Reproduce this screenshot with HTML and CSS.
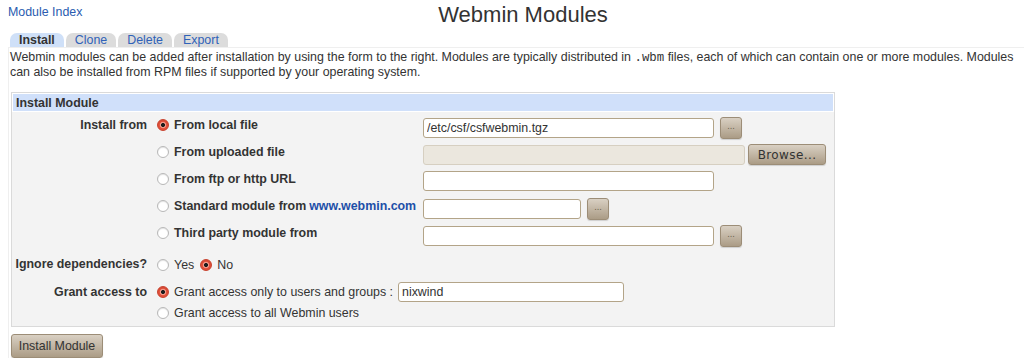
FILE: index.html
```html
<!DOCTYPE html>
<html lang="en">
<head>
    <meta charset="UTF-8">
    <title>Webmin Modules</title>
    <link rel="stylesheet" href="styles.css">
</head>
<body>
    <div class="top">
        <a class="index-link" href="#">Module Index</a>
        <h1>Webmin Modules</h1>
        <span></span>
    </div>

    <ul class="tabs">
        <li class="tab active">Install</li>
        <li class="tab">Clone</li>
        <li class="tab">Delete</li>
        <li class="tab">Export</li>
    </ul>

    <div class="panel">
        <p class="intro">Webmin modules can be added after installation by using the form to the right. Modules are typically distributed in <code>.wbm</code> files, each of which can contain one or more modules. Modules<br>can also be installed from RPM files if supported by your operating system.</p>

        <form class="box">
            <div class="box-head">Install Module</div>
            <div class="box-body">
                <div class="field">
                    <div class="field-label first">Install from</div>
                    <div class="sources">
                        <label class="opt strong"><input type="radio" name="source" checked> From local file</label>
                        <div class="ctl">
                            <input class="text wide" type="text" value="/etc/csf/csfwebmin.tgz">
                            <button type="button" class="btn dots">...</button>
                        </div>

                        <label class="opt strong"><input type="radio" name="source"> From uploaded file</label>
                        <div class="ctl">
                            <input class="text upload" type="text" disabled>
                            <button type="button" class="btn browse">Browse...</button>
                        </div>

                        <label class="opt strong"><input type="radio" name="source"> From ftp or http URL</label>
                        <div class="ctl">
                            <input class="text wide" type="text">
                        </div>

                        <label class="opt strong"><input type="radio" name="source"> Standard module from <a href="#">www.webmin.com</a></label>
                        <div class="ctl">
                            <input class="text short" type="text">
                            <button type="button" class="btn dots">...</button>
                        </div>

                        <label class="opt strong"><input type="radio" name="source"> Third party module from</label>
                        <div class="ctl">
                            <input class="text wide" type="text">
                            <button type="button" class="btn dots">...</button>
                        </div>
                    </div>
                </div>

                <div class="field single">
                    <div class="field-label">Ignore dependencies?</div>
                    <div class="inline">
                        <label class="opt"><input type="radio" name="nodeps"> Yes</label>
                        <label class="opt"><input type="radio" name="nodeps" checked> No</label>
                    </div>
                </div>

                <div class="field grant">
                    <div class="field-label">Grant access to</div>
                    <div class="grant-list">
                        <div class="grant-line">
                            <label class="opt"><input type="radio" name="grant" checked> Grant access only to users and groups :</label>
                            <input class="text users" type="text" value="nixwind">
                        </div>
                        <div class="grant-line">
                            <label class="opt"><input type="radio" name="grant"> Grant access to all Webmin users</label>
                        </div>
                    </div>
                </div>
            </div>
        </form>

        <button type="button" class="btn submit">Install Module</button>
    </div>
</body>
</html>
```

FILE: styles.css
```css
* {
    box-sizing: border-box;
}

body {
    margin: 0;
    font-family: "Liberation Sans", Arial, sans-serif;
    font-size: 12.4px;
    color: #333;
    background: #fff;
}

a {
    color: #1d4fa8;
    text-decoration: none;
}

/* header */
.top {
    display: grid;
    grid-template-columns: 1fr auto 1fr;
    align-items: start;
    height: 33px;
    padding: 0 8px;
}

.index-link {
    margin-top: 5px;
    line-height: 14px;
    color: #2a5cb0;
}

h1 {
    margin: 0 0 0 22px;
    font-size: 22px;
    font-weight: normal;
    line-height: 30px;
    color: #333;
}

/* tabs */
.tabs {
    display: flex;
    gap: 2px;
    margin: 0;
    padding: 0 0 0 10px;
    list-style: none;
}

.tab {
    height: 14px;
    line-height: 15px;
    padding: 0 9px;
    border-radius: 7px 7px 0 0;
    background: #dcdcdc;
    color: #2f62b8;
}

.tab.active {
    background: #cfe0f8;
    color: #333;
    font-weight: bold;
}

/* content */
.panel {
    margin-left: 8px;
    border-top: 1px solid #efefef;
    border-left: 1px solid #efefef;
}

.intro {
    margin: 2px 0 0 1px;
    line-height: 14px;
    white-space: nowrap;
}

.intro code {
    font-family: "Liberation Mono", monospace;
    font-size: 12.4px;
    line-height: 14px;
}

.box {
    width: 824px;
    margin: 13px 0 0 2px;
    border: 1px solid #dadada;
    background: #f3f3f3;
}

.box-head {
    height: 19px;
    line-height: 18px;
    padding: 0 3px;
    border: 1px solid #fff;
    background: #d0e0fa;
    font-weight: bold;
}

.box-body {
    display: flex;
    flex-direction: column;
    gap: 2px;
    padding: 1px 0 3px;
}

.field {
    display: grid;
    grid-template-columns: 139px 1fr;
}

.field-label {
    padding-right: 4px;
    text-align: right;
    font-weight: bold;
    line-height: 27px;
}

.field-label.first {
    line-height: 14px;
    padding-top: 5px;
}

.sources {
    display: grid;
    grid-template-columns: 272px 1fr;
    grid-auto-rows: 27px;
    align-items: start;
}

.sources .opt {
    margin-top: 5px;
    height: 14px;
}

.sources .ctl {
    margin-top: 4px;
}

.ctl {
    display: flex;
    align-items: center;
    gap: 6px;
}

.opt {
    display: inline-flex;
    align-items: center;
    gap: 5px;
    margin-left: 6px;
}

.opt.strong {
    font-weight: bold;
}

.opt a {
    font-weight: bold;
    margin-left: -2px;
}

.single {
    margin-top: 1px;
}

.single .inline {
    display: flex;
    align-items: center;
    height: 27px;
}

.inline .opt + .opt {
    margin-left: 6px;
}

.grant {
    margin-top: 1px;
}

.grant .field-label {
    line-height: 22px;
}

.grant-line {
    display: flex;
    align-items: center;
    height: 20px;
}

.grant-line:first-child {
    height: 22px;
}

.users {
    width: 226px;
    margin-left: 5px;
}

/* radios */
input[type="radio"] {
    appearance: none;
    width: 12px;
    height: 12px;
    margin: 0;
    border: 1px solid #b8b8b8;
    border-radius: 50%;
    background: radial-gradient(circle at 50% 60%, #fff 55%, #ececec);
    box-shadow: inset 0 1px 1px rgba(0, 0, 0, 0.08);
    flex: none;
}

input[type="radio"]:checked {
    border-color: #c8402c;
    background: radial-gradient(circle, #1d1d1d 0 1.7px, #f39a8b 2.3px 2.8px, #e2503a 3.6px);
}

/* text inputs */
.text {
    height: 20px;
    padding: 0 3px;
    border: 1px solid #b3a488;
    border-radius: 3px;
    background: #fff;
    font-family: "Liberation Sans", Arial, sans-serif;
    font-size: 12.4px;
    color: #333;
}

.text.wide {
    width: 291px;
}

.text.short {
    width: 158px;
}

.text.upload {
    width: 322px;
    margin-right: -3px;
    background: #ebe7de;
    border-color: #d6cfc1;
}

/* buttons */
.btn {
    border: 1px solid #9c8d77;
    border-radius: 3px;
    background: linear-gradient(#d9d0c3, #ab9c86);
    color: #333;
    cursor: pointer;
    box-shadow: 0 1px 1px rgba(0, 0, 0, 0.15);
}

.dots {
    width: 22px;
    height: 22px;
    padding: 0 0 3px;
    font-family: "DejaVu Sans", sans-serif;
    font-size: 8px;
    color: #6a5e4e;
}

.browse {
    width: 78px;
    height: 21px;
    padding: 0;
    font-family: "DejaVu Sans", sans-serif;
    font-size: 12px;
    letter-spacing: 0.4px;
}

.submit {
    width: 92px;
    height: 24px;
    margin: 7px 0 0 2px;
    padding: 0;
    font-family: "Liberation Sans", Arial, sans-serif;
    font-size: 12.4px;
}
```
